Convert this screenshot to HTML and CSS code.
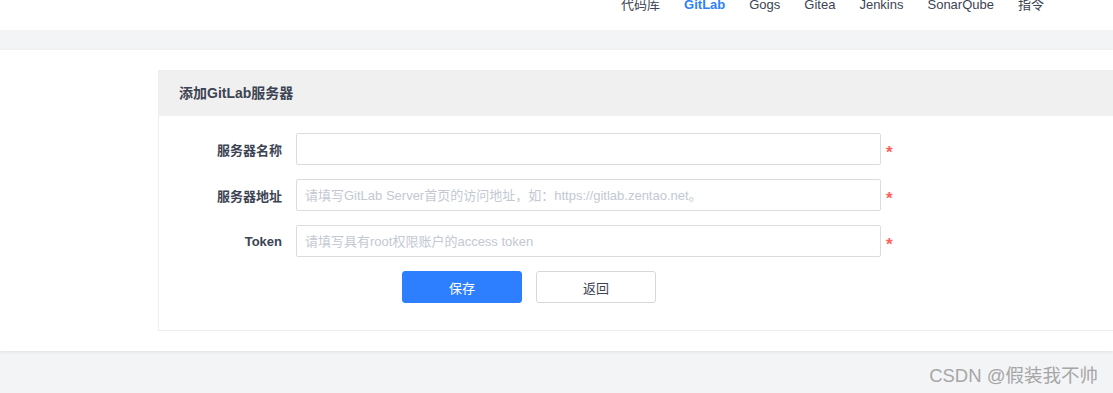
FILE: index.html
```html
<!DOCTYPE html>
<html lang="zh-CN">
<head>
    <meta charset="UTF-8">
    <meta name="viewport" content="width=device-width, initial-scale=1.0">
    <title>添加GitLab服务器</title>
    <link rel="stylesheet" href="styles.css">
</head>
<body>
    <div class="top-nav">
        <a class="nav-item" href="#">代码库</a>
        <a class="nav-item active" href="#">GitLab</a>
        <a class="nav-item" href="#">Gogs</a>
        <a class="nav-item" href="#">Gitea</a>
        <a class="nav-item" href="#">Jenkins</a>
        <a class="nav-item" href="#">SonarQube</a>
        <a class="nav-item" href="#">指令</a>
    </div>
    <div class="strip"></div>
    <div class="main">
        <div class="panel">
            <div class="panel-title">添加GitLab服务器</div>
            <form class="panel-body">
                <div class="form-row">
                    <label class="form-label">服务器名称</label>
                    <input class="form-input" type="text">
                    <span class="required">*</span>
                </div>
                <div class="form-row">
                    <label class="form-label">服务器地址</label>
                    <input class="form-input" type="text" placeholder="请填写GitLab Server首页的访问地址，如：https://gitlab.zentao.net。">
                    <span class="required">*</span>
                </div>
                <div class="form-row">
                    <label class="form-label">Token</label>
                    <input class="form-input" type="text" placeholder="请填写具有root权限账户的access token">
                    <span class="required">*</span>
                </div>
                <div class="form-actions">
                    <button class="btn btn-primary" type="button">保存</button>
                    <button class="btn" type="button">返回</button>
                </div>
            </form>
        </div>
    </div>
    <div class="footer">
        <span class="watermark">CSDN @假装我不帅</span>
    </div>
</body>
</html>
```

FILE: styles.css
```css
body {
    margin: 0;
    height: 100vh;
    overflow: hidden;
    background-color: #f3f4f6;
    font-family: "Liberation Sans", "Noto Sans CJK SC", sans-serif;
    font-size: 13px;
    color: #3c4353;
}
.top-nav {
    height: 30px;
    background-color: #fff;
    display: flex;
    justify-content: flex-end;
    gap: 24px;
    padding-right: 69px;
    overflow: hidden;
}
.nav-item {
    line-height: 14px;
    margin-top: -2px;
    color: #3c4353;
    text-decoration: none;
}
.nav-item.active {
    color: #2e7fff;
    font-weight: bold;
}
.strip {
    height: 20px;
    background-color: #f3f4f6;
}
.main {
    background-color: #fff;
    padding: 20px 0 20px 158px;
    box-shadow: 0 1px 3px rgba(0, 0, 0, 0.08);
    position: relative; /* keep shadow above footer */
}
.panel {
    width: 1100px;
    border: 1px solid #eee;
    background-color: #fff;
}
.panel-title {
    height: 45px;
    line-height: 45px;
    padding-left: 20px;
    background-color: #f0f0f0;
    font-size: 14px;
    font-weight: bold;
    color: #3c4353;
}
.panel-body {
    margin: 0;
    padding: 17px 0 27px 0;
    display: flex;
    flex-direction: column;
    gap: 14px;
}
.form-row {
    display: flex;
    align-items: center;
}
.form-label {
    width: 123px;
    margin-right: 14px;
    text-align: right;
    font-weight: bold;
    color: #3c4353;
}
.form-input {
    width: 585px;
    height: 32px;
    box-sizing: border-box;
    border: 1px solid #dcdcdc;
    border-radius: 2px;
    padding: 0 8px;
    font-family: inherit;
    font-size: 13px;
    color: #3c4353;
    outline: none;
}
.form-input::placeholder {
    color: #c4c8d2;
}
.required {
    margin-left: 5px;
    margin-top: 6px;
    color: #ff5d5d;
    font-size: 17px;
    font-weight: bold;
    line-height: 17px;
}
.form-actions {
    display: flex;
    gap: 14px;
    padding-left: 243px;
}
.btn {
    width: 120px;
    height: 32px;
    border: 1px solid #d8d8d8;
    border-radius: 3px;
    background-color: #fff;
    color: #3c4353;
    font-family: inherit;
    font-size: 13px;
}
.btn-primary {
    background-color: #2e7fff;
    border-color: #2e7fff;
    color: #fff;
}
.footer {
    height: 43px;
    display: flex;
    align-items: center;
    justify-content: flex-end;
    padding-right: 15px;
}
.watermark {
    font-size: 18.5px;
    color: #a6a6a6;
    margin-top: 3px;
}
```
